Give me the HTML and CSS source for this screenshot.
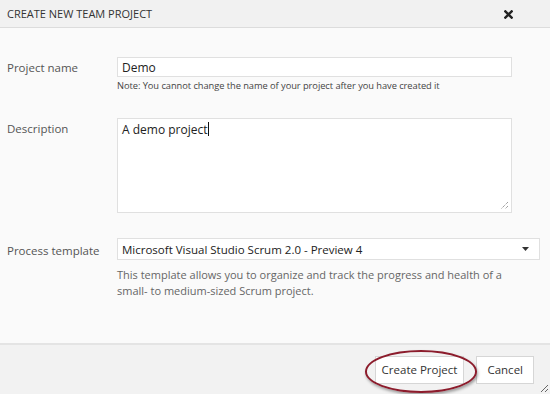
FILE: index.html
```html
<!DOCTYPE html>
<html lang="en">
<head>
    <meta charset="UTF-8">
    <title>Create new team project</title>
    <link rel="stylesheet" href="styles.css">
</head>
<body>
    <div class="dialog">
        <div class="dialog-header">
            <span class="dialog-title">CREATE NEW TEAM PROJECT</span>
            <svg class="close" width="9" height="9" viewBox="0 0 10 10">
                <path d="M1.5 1.5 L8.5 8.5 M8.5 1.5 L1.5 8.5" stroke="#222" stroke-width="2.6" stroke-linecap="square"/>
            </svg>
        </div>

        <div class="dialog-body">
            <!-- project name -->
            <div class="row">
                <label class="label">Project name</label>
                <div class="field">
                    <input type="text" class="text-input" value="Demo" readonly>
                    <div class="note">Note: You cannot change the name of your project after you have created it</div>
                </div>
            </div>

            <!-- description -->
            <div class="row row-desc">
                <label class="label">Description</label>
                <div class="field">
                    <div class="textarea">A demo project<span class="caret"></span>
                        <svg class="grip" width="9" height="9" viewBox="0 0 9 9">
                            <path d="M8 1 L1 8 M8 5 L5 8" stroke="#777" stroke-width="1" stroke-dasharray="1 1"/>
                        </svg>
                    </div>
                </div>
            </div>

            <!-- process template -->
            <div class="row row-template">
                <label class="label">Process template</label>
                <div class="field field-wide">
                    <div class="select">
                        <span>Microsoft Visual Studio Scrum 2.0 - Preview 4</span>
                        <svg width="7" height="4" viewBox="0 0 7 4"><path d="M0 0 H7 L3.5 4 Z" fill="#333"/></svg>
                    </div>
                    <div class="help">This template allows you to organize and track the progress and health of a small- to medium-sized Scrum project.</div>
                </div>
            </div>
        </div>

        <div class="dialog-footer">
            <span class="highlight">
                <button class="btn btn-create">Create Project</button>
            </span>
            <button class="btn btn-cancel">Cancel</button>
            <svg class="corner" width="10" height="10" viewBox="0 0 10 10">
                <path d="M9 2 L2 9 M9 6 L6 9" stroke="#666" stroke-width="1"/>
            </svg>
        </div>
    </div>
</body>
</html>
```

FILE: styles.css
```css
/* page */
body {
    margin: 0;
    padding: 0;
    font-family: 'Open Sans', 'Noto Sans', sans-serif;
    font-size: 12px;
    color: #333;
    background-color: #fafafa;
}

.dialog {
    width: 550px;
    height: 394px;
    display: flex;
    flex-direction: column;
    background-color: #fafafa;
}

/* header */
.dialog-header {
    height: 27px;
    display: flex;
    align-items: center;
    justify-content: space-between;
    padding: 0 37px 0 7px;
    background-color: #f1f1f1;
    border-bottom: 1px solid #dcdcdc;
}

.dialog-title {
    font-size: 11px;
    color: #333;
}

.close {
    margin-top: 1px;
}

/* body */
.dialog-body {
    flex: 1;
    padding: 29px 0 0 7px;
}

.row {
    display: flex;
}

.label {
    width: 110px;
    flex: none;
    font-size: 11.5px;
    color: #555;
    padding-top: 3px;
}

.field {
    width: 395px;
}

.field-wide {
    width: 423px;
}

.text-input {
    box-sizing: border-box;
    width: 100%;
    height: 20px;
    margin: 0;
    padding: 1px 4px 0;
    border: 1px solid #e0e0e0;
    background-color: #fff;
    font-family: inherit;
    font-size: 12px;
    color: #222;
    outline: none;
}

.note {
    margin-top: 2px;
    font-size: 9.3px;
    color: #444;
    letter-spacing: -0.05px;
}

.row-desc {
    margin-top: 26px;
}

.textarea {
    position: relative;
    box-sizing: border-box;
    height: 95px;
    padding: 2px 4px;
    border: 1px solid #e0e0e0;
    background-color: #fff;
    color: #222;
}

.caret {
    display: inline-block;
    width: 1px;
    height: 14px;
    background-color: #111;
    vertical-align: -2px;
}

.grip {
    position: absolute;
    right: 2px;
    bottom: 2px;
}

.row-template {
    margin-top: 25px;
}

.row-template .label {
    padding-top: 5px;
}

.select {
    box-sizing: border-box;
    height: 22px;
    display: flex;
    align-items: center;
    justify-content: space-between;
    padding: 0 10px 0 4px;
    border: 1px solid #e0e0e0;
    background-color: #fff;
    color: #222;
    font-size: 11.5px;
}

.help {
    margin-top: 7px;
    width: 400px;
    font-size: 11px;
    line-height: 16px;
    color: #666;
}

/* footer */
.dialog-footer {
    position: relative;
    height: 49px;
    display: flex;
    align-items: center;
    justify-content: flex-end;
    gap: 12px;
    padding-right: 16px;
    background-color: #f2f2f2;
    border-top: 2px solid #e4e4e4;
}

.btn {
    height: 28px;
    border: 1px solid #d6d6d6;
    background-color: #fff;
    font-family: inherit;
    font-size: 11.5px;
    color: #333;
}

.btn-create {
    padding: 0 6px;
}

.btn-cancel {
    padding: 0 10px;
}

/* red ring drawn round the create button */
.highlight {
    position: relative;
    display: inline-block;
}

.highlight::after {
    content: '';
    position: absolute;
    left: -10px;
    right: -13px;
    top: -6px;
    bottom: -9px;
    border: 2px solid #8c1c2c;
    border-radius: 50%;
    box-shadow: 1px 2px 3px rgba(0, 0, 0, 0.35);
}

.corner {
    position: absolute;
    right: 1px;
    bottom: 1px;
}
```
